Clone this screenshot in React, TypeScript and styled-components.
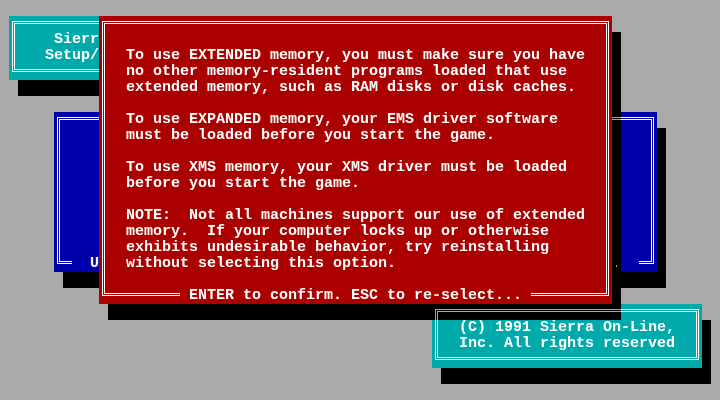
import React from 'react';
import styled, { createGlobalStyle } from 'styled-components';

// text-mode cell size: 80x25 screen of 9x16 characters
const CW = 9;
const CH = 16;

const GlobalStyle = createGlobalStyle`
  html, body {
    margin: 0;
    padding: 0;
    background: #aaaaaa;
  }
`;

const Screen = styled.div`
  position: relative;
  width: 720px;
  height: 400px;
  overflow: hidden;
  background: #aaaaaa;
  color: #ffffff;
  font-family: "Liberation Mono", "DejaVu Sans Mono", monospace;
  font-size: 15px;
  font-weight: bold;
  line-height: 16px;
  white-space: pre;
`;

const Window = styled.div<{ $col: number; $row: number; $cols: number; $rows: number }>`
  position: absolute;
  left: ${p => p.$col * CW}px;
  top: ${p => p.$row * CH}px;
  width: ${p => p.$cols * CW}px;
  height: ${p => p.$rows * CH}px;
`;

// drop shadow one cell right and down; whatever lies under it turns
// black, and white glyphs show through as light grey
const Shadow = styled.div`
  position: absolute;
  left: ${CW}px;
  top: ${CH}px;
  right: -${CW}px;
  bottom: -${CH}px;
  backdrop-filter: grayscale(1) brightness(0.54) contrast(3.7);
`;

const Panel = styled.div<{ $bg: string; $top: number; $left: number }>`
  position: relative;
  box-sizing: border-box;
  height: 100%;
  display: flex;
  flex-direction: column;
  background: ${p => p.$bg};
  padding: ${p => p.$top * CH}px 0 0 ${p => p.$left * CW}px;

  /* double-line frame */
  &::before {
    content: "";
    position: absolute;
    inset: 5px 3px 8px 3px;
    border: 3px double #ffffff;
  }
`;

const Line = styled.div`
  position: relative;
  height: ${CH}px;
`;

// caption sitting on the bottom edge of the frame
const FrameCaption = styled.div<{ $bg: string; $pad: number }>`
  position: absolute;
  left: 0;
  right: 0;
  bottom: 0;
  height: ${CH}px;
  display: flex;
  justify-content: center;

  span {
    background: ${p => p.$bg};
    padding: 0 ${p => p.$pad * CW}px;
  }
`;

const TEAL = '#00aaaa';
const BLUE = '#0000aa';
const RED = '#aa0000';

const memoryNotes = [
  'To use EXTENDED memory, you must make sure you have',
  'no other memory-resident programs loaded that use',
  'extended memory, such as RAM disks or disk caches.',
  '',
  'To use EXPANDED memory, your EMS driver software',
  'must be loaded before you start the game.',
  '',
  'To use XMS memory, your XMS driver must be loaded',
  'before you start the game.',
  '',
  'NOTE:  Not all machines support our use of extended',
  'memory.  If your computer locks up or otherwise',
  'exhibits undesirable behavior, try reinstalling',
  'without selecting this option.',
];

export default function App() {
  return (
    <>
      <GlobalStyle />
      <Screen>
        <Window $col={1} $row={1} $cols={30} $rows={4}>
          <Shadow />
          <Panel $bg={TEAL} $top={1} $left={4}>
            <Line> Sierra On-Line</Line>
            <Line>Setup/Installation</Line>
          </Panel>
        </Window>

        <Window $col={6} $row={7} $cols={67} $rows={10}>
          <Shadow />
          <Panel $bg={BLUE} $top={1} $left={3}>
            <FrameCaption $bg={BLUE} $pad={2}>
              <span>Use arrow keys to highlight your choices, then press ENTER.</span>
            </FrameCaption>
          </Panel>
        </Window>

        <Window $col={48} $row={19} $cols={30} $rows={4}>
          <Shadow />
          <Panel $bg={TEAL} $top={1} $left={3}>
            <Line>(C) 1991 Sierra On-Line,</Line>
            <Line>Inc. All rights reserved</Line>
          </Panel>
        </Window>

        <Window $col={11} $row={1} $cols={57} $rows={18}>
          <Shadow />
          <Panel $bg={RED} $top={2} $left={3}>
            {memoryNotes.map((text, i) => (
              <Line key={i}>{text}</Line>
            ))}
            <FrameCaption $bg={RED} $pad={1}>
              <span>ENTER to confirm. ESC to re-select...</span>
            </FrameCaption>
          </Panel>
        </Window>
      </Screen>
    </>
  );
}
